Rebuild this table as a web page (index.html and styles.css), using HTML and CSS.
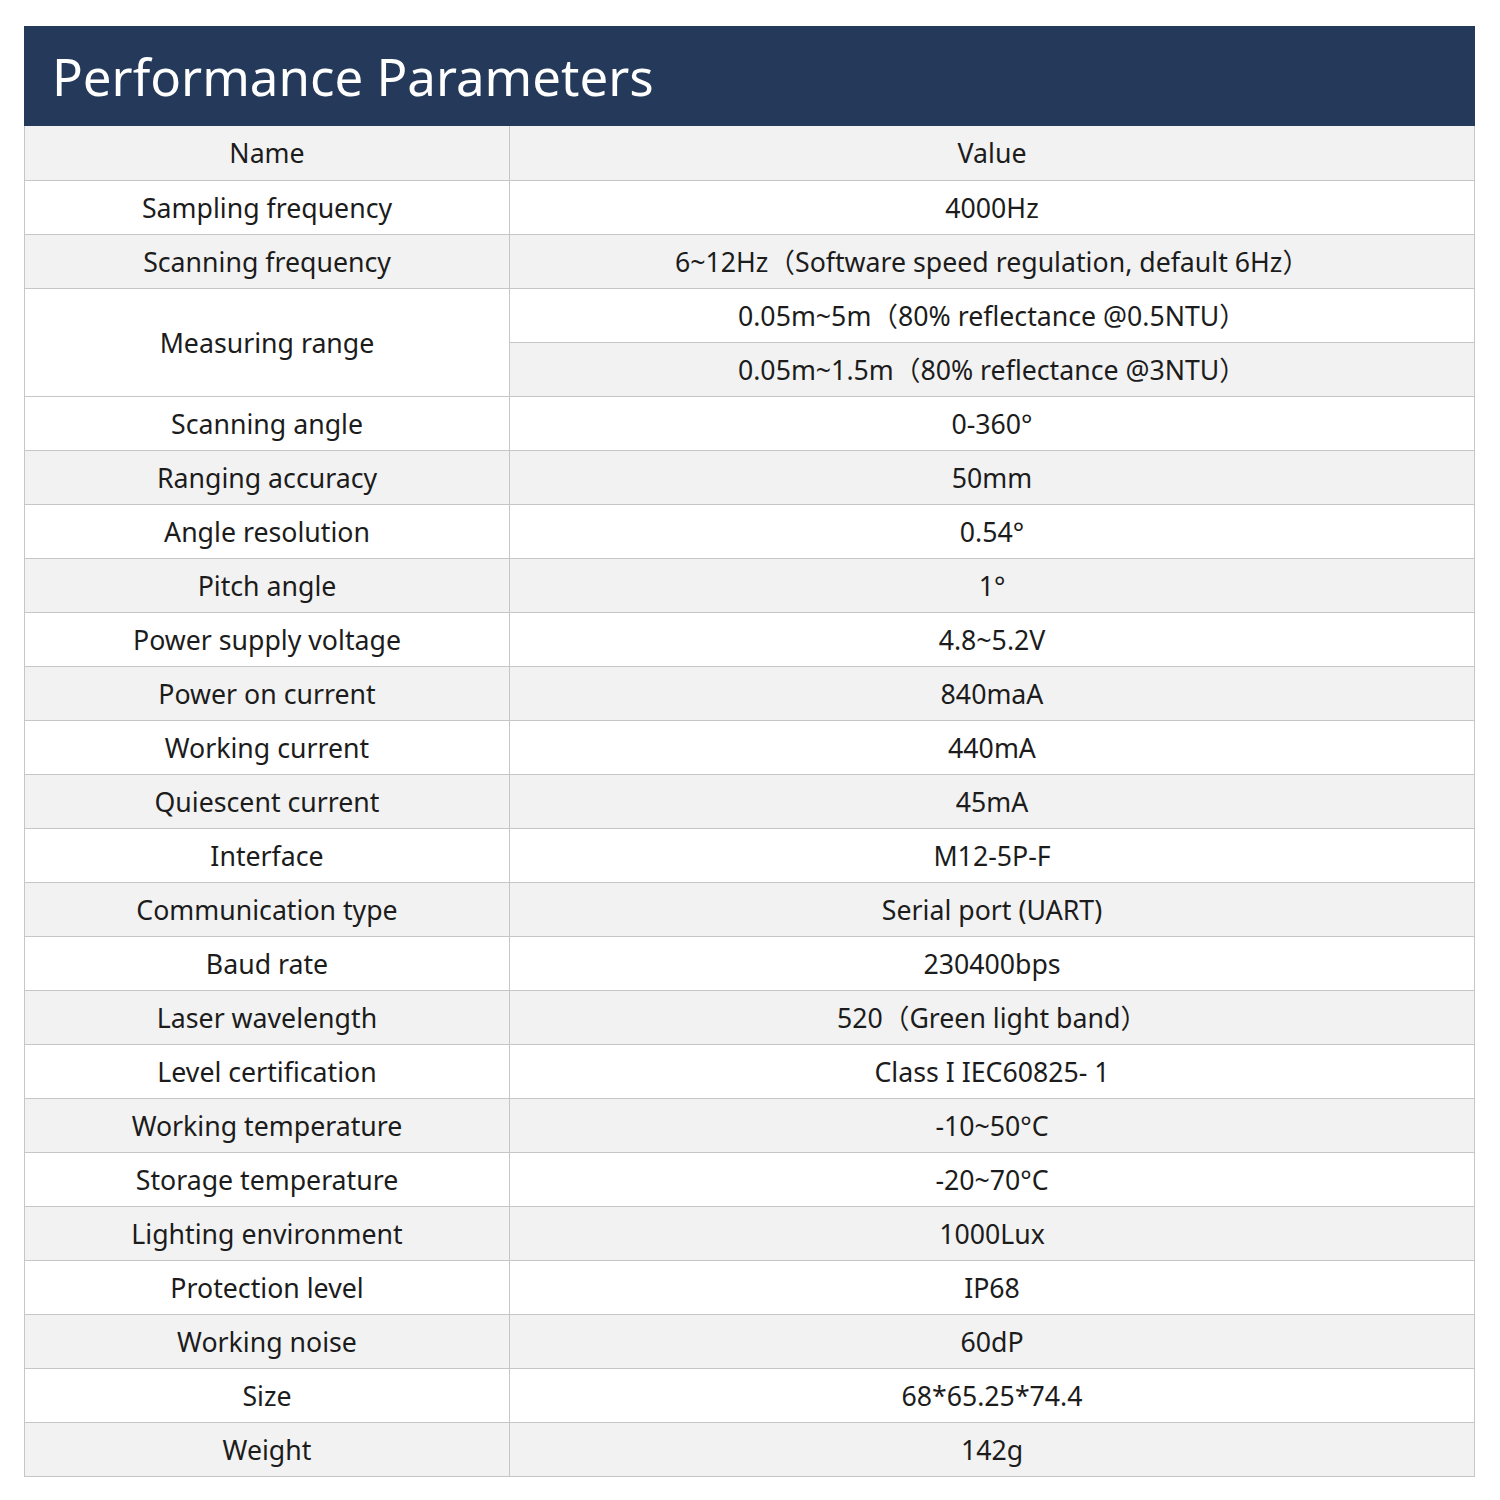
FILE: index.html
```html
<!DOCTYPE html>
<html>
<head>
<meta charset="utf-8">
<link rel="stylesheet" href="styles.css">
</head>
<body>
<div class="sheet">
  <div class="title">Performance Parameters</div>
  <table class="params">
    <colgroup><col class="c-name"><col class="c-val"></colgroup>
    <tr class="g head"><td>Name</td><td>Value</td></tr>
    <tr class="w"><td>Sampling frequency</td><td>4000Hz</td></tr>
    <tr class="g"><td>Scanning frequency</td><td>6~12Hz（Software speed regulation, default 6Hz）</td></tr>
    <tr class="w"><td rowspan="2" class="wcell">Measuring range</td><td>0.05m~5m（80% reflectance @0.5NTU）</td></tr>
    <tr class="g"><td>0.05m~1.5m（80% reflectance @3NTU）</td></tr>
    <tr class="w"><td>Scanning angle</td><td>0-360°</td></tr>
    <tr class="g"><td>Ranging accuracy</td><td>50mm</td></tr>
    <tr class="w"><td>Angle resolution</td><td>0.54°</td></tr>
    <tr class="g"><td>Pitch angle</td><td>1°</td></tr>
    <tr class="w"><td>Power supply voltage</td><td>4.8~5.2V</td></tr>
    <tr class="g"><td>Power on current</td><td>840maA</td></tr>
    <tr class="w"><td>Working current</td><td>440mA</td></tr>
    <tr class="g"><td>Quiescent current</td><td>45mA</td></tr>
    <tr class="w"><td>Interface</td><td>M12-5P-F</td></tr>
    <tr class="g"><td>Communication type</td><td>Serial port (UART)</td></tr>
    <tr class="w"><td>Baud rate</td><td>230400bps</td></tr>
    <tr class="g"><td>Laser wavelength</td><td>520（Green light band）</td></tr>
    <tr class="w"><td>Level certification</td><td>Class I IEC60825- 1</td></tr>
    <tr class="g"><td>Working temperature</td><td>-10~50°C</td></tr>
    <tr class="w"><td>Storage temperature</td><td>-20~70°C</td></tr>
    <tr class="g"><td>Lighting environment</td><td>1000Lux</td></tr>
    <tr class="w"><td>Protection level</td><td>IP68</td></tr>
    <tr class="g"><td>Working noise</td><td>60dP</td></tr>
    <tr class="w"><td>Size</td><td>68*65.25*74.4</td></tr>
    <tr class="g"><td>Weight</td><td>142g</td></tr>
  </table>
</div>
</body>
</html>
```

FILE: styles.css
```css
html, body {
  margin: 0;
  padding: 0;
  background: #ffffff;
}
.sheet {
  padding: 26px 0 0 24px;
  width: 1451px;
  font-family: "Noto Sans", "Noto Sans CJK SC", sans-serif;
  color: #1c1c1c;
}
.title {
  background: #253a5a;
  color: #ffffff;
  height: 100px;
  box-sizing: border-box;
  padding-left: 28px;
  font-size: 51px;
  line-height: 100px;
}
.params {
  width: 1451px;
  border-collapse: collapse;
  table-layout: fixed;
}
.c-name { width: 485px; }
.params td {
  height: 53px;
  padding: 0;
  border: 1px solid #c6c6c6;
  text-align: center;
  vertical-align: middle;
  font-size: 26.7px;
  line-height: 30px;
}
.params tr.head td {
  border-top: none;
  height: 54px;
}
.g td { background: #f2f2f2; }
.w td { background: #ffffff; }
.params td.wcell { background: #ffffff; }
```
